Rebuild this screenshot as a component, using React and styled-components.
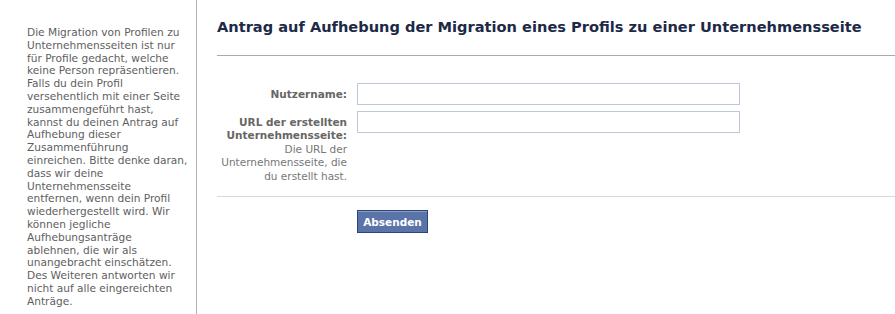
import React from 'react'
import styled, { createGlobalStyle } from 'styled-components'

const GlobalStyle = createGlobalStyle`
    body {
        margin: 0;
        background: #fff;
        font-family: "DejaVu Sans", "Open Sans", sans-serif;
        font-size: 10.6px;
    }
`

function App() {
    return (
        <>
            <GlobalStyle />
            <Page>
                <Sidebar>
                    Die Migration von Profilen zu Unternehmensseiten ist nur für Profile gedacht, welche keine Person repräsentieren. Falls du dein Profil versehentlich mit einer Seite zusammengeführt hast, kannst du deinen Antrag auf Aufhebung dieser Zusammenführung <NoWrap>einreichen. Bitte denke daran,</NoWrap> dass wir deine Unternehmensseite entfernen, wenn dein Profil wiederhergestellt wird. Wir können jegliche Aufhebungsanträge ablehnen, die wir als unangebracht einschätzen. Des Weiteren antworten wir nicht auf alle eingereichten Anträge.
                </Sidebar>

                <Main>
                    <Title>Antrag auf Aufhebung der Migration eines Profils zu einer Unternehmensseite</Title>

                    <Form>
                        <Row>
                            <Label bold>Nutzername:</Label>
                            <Input type="text" />
                        </Row>
                        <Row>
                            <Label>
                                <strong>URL der erstellten Unternehmensseite:</strong>
                                <Caption>Die URL der Unternehmensseite, die du erstellt hast.</Caption>
                            </Label>
                            <Input type="text" />
                        </Row>
                    </Form>

                    <Footer>
                        <SubmitBtn>Absenden</SubmitBtn>
                    </Footer>
                </Main>
            </Page>
        </>
    )
}

export default App;

const Page = styled.div`
    display: flex;
    width: 895px;
    height: 314px;
    overflow: hidden;
`

const Sidebar = styled.div`
    width: 158px;
    flex-shrink: 0;
    padding: 26px 11px 0 27px;
    border-right: 1px solid #b3b3b3;
    color: #5e5e5e;
    line-height: 12.8px;
`

const NoWrap = styled.span`
    white-space: nowrap;
`

const Main = styled.div`
    flex: 1;
    padding: 0 0 0 20px;
`

const Title = styled.h2`
    margin: 0;
    padding: 18px 0 19px;
    font-size: 14.6px;
    line-height: 18px;
    font-weight: bold;
    color: #1c2a47;
    border-bottom: 1px solid #aaa;
`

const Form = styled.div`
    display: flex;
    flex-direction: column;
    gap: 6px;
    padding: 27px 0 13px;
    border-bottom: 1px solid #d9d9d9;
`

const Row = styled.div`
    display: flex;
    align-items: flex-start;
    gap: 10px;
`

const Label = styled.label`
    width: 130px;
    flex-shrink: 0;
    text-align: right;
    color: #666;
    font-size: 10.5px;
    font-weight: ${props => props.bold ? 'bold' : 'normal'};
    line-height: 13.4px;
    padding-top: 5px;

    strong {
        display: block;
        font-weight: bold;
    }
`

const Caption = styled.div`
    color: #777;
`

const Input = styled.input`
    box-sizing: border-box;
    width: 383px;
    height: 22px;
    padding: 0 3px;
    margin: 0;
    border: 1px solid #bdc7d8;
    font-family: inherit;
    font-size: 11px;
`

const Footer = styled.div`
    padding: 13px 0 0 140px;
`

const SubmitBtn = styled.button`
    width: 71px;
    height: 23px;
    padding: 0;
    background: #5b74a8;
    border: 1px solid #29447e;
    box-shadow: inset 0 1px 0 #8a9cc2;
    color: #fff;
    font-family: inherit;
    font-size: 10.5px;
    font-weight: bold;
    cursor: pointer;
`
